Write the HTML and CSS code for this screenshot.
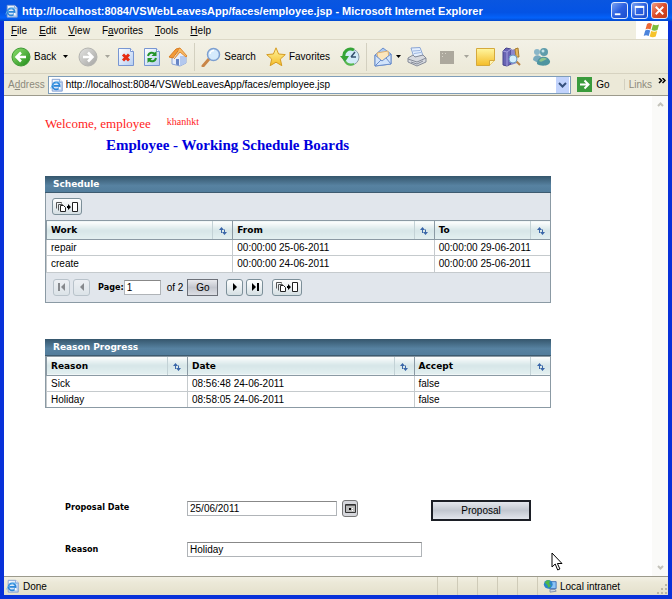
FILE: index.html
```html
<!DOCTYPE html>
<html lang="en">
<head>
    <meta charset="UTF-8">
    <meta name="viewport" content="width=device-width, initial-scale=1.0">
    <title>Employee - Working Schedule Boards</title>
    <link rel="stylesheet" href="styles.css">
</head>
<body>
    <!-- Shared icons -->
    <svg class="defs" width="0" height="0" aria-hidden="true">
        <defs>
            <linearGradient id="green" x1="0" y1="0" x2="1" y2="1">
                <stop offset="0" stop-color="#8fe070"/><stop offset="1" stop-color="#1f8a18"/>
            </linearGradient>
            <linearGradient id="grey" x1="0" y1="0" x2="1" y2="1">
                <stop offset="0" stop-color="#e4e4e2"/><stop offset="1" stop-color="#a4a4a2"/>
            </linearGradient>
            <linearGradient id="paper" x1="0" y1="0" x2="1" y2="1">
                <stop offset="0" stop-color="#ffffff"/><stop offset="1" stop-color="#b4cdf2"/>
            </linearGradient>
            <linearGradient id="gold" x1="0" y1="0" x2="0" y2="1">
                <stop offset="0" stop-color="#fff6a0"/><stop offset="1" stop-color="#f4bc28"/>
            </linearGradient>
            <symbol id="i-page" viewBox="0 0 16 16">
                <path d="M2.500 1.500H11l3 3V15H2.500z" fill="url(#paper)" stroke="#7d9ad0"/>
                <path d="M11 1.500v3h3" fill="#fff" stroke="#7d9ad0"/>
                <circle cx="7" cy="9" r="4" fill="none" stroke="#2b86d8" stroke-width="2"/>
                <path d="M4 9h7" stroke="#2b86d8" stroke-width="2"/>
                <path d="M10 11l2 1" stroke="#fff" stroke-width="2"/>
                <path d="M1 12C1 8 8 3 12 5" fill="none" stroke="#5cb2ef"/>
            </symbol>
            <symbol id="i-sort" viewBox="0 0 8 8">
                <path d="M2.500 6V2M5.500 2.500v4" stroke="#3a66a8"/>
                <path d="M0 3l2.500-3L5 3zM3 5h5L5.500 8z" fill="#3a66a8"/>
            </symbol>
            <symbol id="i-paginate" viewBox="0 0 24 12">
                <path d="M1.500 7.500v-6h5v1" fill="none" stroke="#555"/>
                <path d="M3.500 9.500v-6h4v1" fill="none" stroke="#555"/>
                <path d="M5.500 4.500h3l2 2v4h-5z" fill="#fff" stroke="#222"/>
                <path d="M12 5h1V3l3 3-3 3V7h-1z" fill="#000"/>
                <path d="M17.500 1.500h5v9h-5z" fill="#fff" stroke="#222"/>
            </symbol>
        </defs>
    </svg>

    <div class="window">
        <header class="titlebar">
            <svg class="icon16" aria-hidden="true"><use href="#i-page"/></svg>
            <span class="title">http://localhost:8084/VSWebLeavesApp/faces/employee.jsp - Microsoft Internet Explorer</span>
            <div class="window-buttons">
                <button type="button" aria-label="Minimize"><svg viewBox="0 0 16 16"><path d="M3 11h6v2H3z" fill="#fff"/></svg></button>
                <button type="button" aria-label="Maximize"><svg viewBox="0 0 16 16"><path d="M3.500 4.500h9v8h-9zM3 4h10" fill="none" stroke="#fff"/><path d="M3 3h10v2H3z" fill="#fff"/></svg></button>
                <button type="button" class="close" aria-label="Close"><svg viewBox="0 0 16 16"><path d="M4 4l8 8M12 4l-8 8" stroke="#fff" stroke-width="2"/></svg></button>
            </div>
        </header>

        <nav class="menubar">
            <button type="button"><u>F</u>ile</button>
            <button type="button"><u>E</u>dit</button>
            <button type="button"><u>V</u>iew</button>
            <button type="button">F<u>a</u>vorites</button>
            <button type="button"><u>T</u>ools</button>
            <button type="button"><u>H</u>elp</button>
            <div class="flag">
                <svg viewBox="0 0 18 16" width="18" height="16" aria-hidden="true">
                    <path d="M4 2c2-1.500 3-1 5 0L7.500 7.500c-2-1-3.500-1-5 0z" fill="#ee6a36"/>
                    <path d="M10 2.500c2 1 4 1 6 0L14.500 8c-2 1-4 1-6 0z" fill="#7cbc3c"/>
                    <path d="M2.200 8.500c2-1 3-1 5 0L5.700 14c-2-1-3.500-1-5 0z" fill="#4c84dc"/>
                    <path d="M8.200 9c2 1 4 1 6 0l-1.500 5.500c-2 1-4 1-6 0z" fill="#f6c32c"/>
                </svg>
            </div>
        </nav>

        <div class="toolbar">
            <button type="button" class="tool">
                <svg class="icon20" viewBox="0 0 20 20" aria-hidden="true"><circle cx="10" cy="10" r="9" fill="url(#green)" stroke="#3f9a35"/><path d="M15 10H6M10 5.500L5.500 10l4.500 4.500" fill="none" stroke="#fff" stroke-width="2.500"/></svg>
                <span>Back</span>
                <svg class="arrow gap" viewBox="0 0 5 3" aria-hidden="true"><path d="M0 0h5L2.500 3z"/></svg>
            </button>
            <button type="button" class="tool spaced" aria-label="Forward">
                <svg class="icon20" viewBox="0 0 20 20" aria-hidden="true"><circle cx="10" cy="10" r="9" fill="url(#grey)" stroke="#b4b4b0"/><path d="M5 10h9M10 5.500l4.500 4.500-4.500 4.500" fill="none" stroke="#fff" stroke-width="2.500"/></svg>
                <svg class="arrow gap pale" viewBox="0 0 5 3" aria-hidden="true"><path d="M0 0h5L2.500 3z"/></svg>
            </button>
            <button type="button" class="tool" aria-label="Stop">
                <svg class="icon20" viewBox="0 0 20 20" aria-hidden="true"><path d="M2.500 1.500h12l3 3v14h-15z" fill="url(#paper)" stroke="#7896d2"/><path d="M14.500 1.500v3h3" fill="#fff" stroke="#7896d2"/><path d="M7 7.500l6 6M13 7.500l-6 6" stroke="#e62c14" stroke-width="3"/></svg>
            </button>
            <button type="button" class="tool" aria-label="Refresh">
                <svg class="icon20" viewBox="0 0 20 20" aria-hidden="true"><path d="M2.500 1.500h12l3 3v14h-15z" fill="url(#paper)" stroke="#7896d2"/><path d="M14.500 1.500v3h3" fill="#fff" stroke="#7896d2"/><path d="M6 9c1-4 5-4 7-2M14 11c-1 4-5 4-7 2" fill="none" stroke="#23942a" stroke-width="2"/><path d="M14.500 4v5h-5zM5.500 16v-5h5z" fill="#23942a"/></svg>
            </button>
            <button type="button" class="tool" aria-label="Home">
                <svg class="icon20" viewBox="0 0 20 20" aria-hidden="true"><path d="M4 9v8l8 2 6-3V8l-5-5z" fill="#e6edfa" stroke="#8ba4d6"/><path d="M12 19V9l6 0v7z" fill="#b3c8ee"/><path d="M1 10l7-8 4-1-7 10z" fill="#f39a36" stroke="#d87c22"/><path d="M12 1l7 8-1 1-6-5-6 7" fill="#f8ba64" stroke="#e08c34"/><path d="M8 12h3v6.500l-3-1z" fill="#6684c4"/></svg>
            </button>
            <span class="divider"></span>
            <button type="button" class="tool">
                <svg class="icon20" viewBox="0 0 20 20" aria-hidden="true"><path d="M8 12l-6 7" stroke="#c98547" stroke-width="3" stroke-linecap="round"/><circle cx="12.500" cy="7.500" r="6" fill="#d5eafc" stroke="#7d9fd0" stroke-width="1.500"/><path d="M9 7c0-2 2-3.500 4-3.500" fill="none" stroke="#fff" stroke-width="1.500"/></svg>
                <span>Search</span>
            </button>
            <button type="button" class="tool spaced">
                <svg class="icon20" viewBox="0 0 20 20" aria-hidden="true"><path d="M10 .8l2.600 6.200 6.700.6-5 4.500 1.500 6.600L10 15.200l-5.800 3.500 1.500-6.600-5-4.500 6.700-.6z" fill="url(#gold)" stroke="#d69c24"/></svg>
                <span>Favorites</span>
            </button>
            <button type="button" class="tool spaced" aria-label="History">
                <svg class="icon20" viewBox="0 0 20 20" aria-hidden="true"><circle cx="11" cy="10" r="8" fill="#d3ebf8" stroke="#8c9cab"/><path d="M11 10l4-5M11 10h5" stroke="#35506e" stroke-width="1.500"/><path d="M14 3C8 0 3 5 4 10" fill="none" stroke="#36a437" stroke-width="3"/><path d="M0 9h9l-4 6z" fill="#36a437"/><path d="M5 14c2 4 6 4 9 3" fill="none" stroke="#57b84f" stroke-width="2"/></svg>
            </button>
            <span class="divider"></span>
            <button type="button" class="tool" aria-label="Mail">
                <svg class="icon20" viewBox="0 0 20 20" aria-hidden="true"><path d="M2 8l8-7 8 6v10L2 19z" fill="#a9c8f2" stroke="#6b8ecb"/><path d="M4 6l11-2 1 7-6 4-5-3z" fill="#fbe6bd" stroke="#e0b272"/><path d="M2 8l7 6 9-7v10L2 19z" fill="#d2e4fb" stroke="#6b8ecb"/><path d="M2 19l6-6M18 17l-5-6" stroke="#6b8ecb"/></svg>
                <svg class="arrow" viewBox="0 0 5 3" aria-hidden="true"><path d="M0 0h5L2.500 3z"/></svg>
            </button>
            <button type="button" class="tool" aria-label="Print">
                <svg class="icon20" viewBox="0 0 20 20" aria-hidden="true"><path d="M4 1l9-.5 3 8-9 2z" fill="#e3eefd" stroke="#8aa5d4"/><path d="M6 4l7-.5M7 6.500l7-1" stroke="#9cb6e2"/><path d="M1 11l5-3 2 2 8-2 3 3v4l-9 4-9-4z" fill="#d7dae0" stroke="#858b98"/><path d="M1 12l9 3 9-4M4 15l6 2 6-3" fill="none" stroke="#858b98"/></svg>
            </button>
            <button type="button" class="tool spaced" aria-label="Edit">
                <svg class="icon20" viewBox="0 0 20 20" aria-hidden="true"><path d="M3 4h14v13H3z" fill="#aca89d"/><path d="M5 6h1v1H5zM8 6h1v1H8zM5 9h1v1H5z" fill="#d8d4c8"/></svg>
                <svg class="arrow gap pale" viewBox="0 0 5 3" aria-hidden="true"><path d="M0 0h5L2.500 3z"/></svg>
            </button>
            <button type="button" class="tool" aria-label="Discuss">
                <svg class="icon20" viewBox="0 0 20 20" aria-hidden="true"><path d="M1.500 1.500h18v12l-5 5h-13z" fill="url(#gold)" stroke="#d5a93c"/><path d="M14.500 18.500v-5h5" fill="#fff4b4" stroke="#d5a93c"/></svg>
            </button>
            <button type="button" class="tool" aria-label="Research">
                <svg class="icon20" viewBox="0 0 20 20" aria-hidden="true"><path d="M2 4l3-3 5 1v15l-4 2-4-1z" fill="#6964b4" stroke="#47448c"/><path d="M2 4l4 1v14M6 5l4-3" fill="none" stroke="#a5a0de"/><path d="M10 3l4-1 2 14-6 2z" fill="#8c87ca"/><path d="M14 2l3-1 1 9h-3z" fill="#e5b85c" stroke="#a77c2d"/><path d="M15 14l4 4" stroke="#b98445" stroke-width="2"/><circle cx="12" cy="12" r="4" fill="#d4effc" stroke="#6c9ac4"/></svg>
            </button>
            <button type="button" class="tool spaced" aria-label="Messenger">
                <svg class="icon20" viewBox="0 0 20 20" aria-hidden="true"><circle cx="6" cy="5" r="3" fill="#89b6c8"/><path d="M2 13c0-6 8-6 9-1l-4 4z" fill="#77a9bd"/><circle cx="13" cy="5" r="4" fill="#5f9dab"/><circle cx="12" cy="4" r="1.500" fill="#c5e3e8"/><path d="M6 17c0-9 11-9 13-3 1 5-9 6-13 3z" fill="#4e94a0"/><path d="M8 14c2-4 5-4 8-2-3 1-5 4-8 2z" fill="#8fc48c"/></svg>
            </button>
        </div>

        <form class="addressbar">
            <label for="url">A<u>d</u>dress</label>
            <div class="url-box">
                <svg class="icon16" aria-hidden="true"><use href="#i-page"/></svg>
                <input type="text" id="url" value="http://localhost:8084/VSWebLeavesApp/faces/employee.jsp">
                <button type="button" class="drop" aria-label="Show history"><svg viewBox="0 0 9 6" width="9" height="6"><path d="M1 1l3.500 3.500L8 1" fill="none" stroke="#35507c" stroke-width="2"/></svg></button>
            </div>
            <button type="button" class="go">
                <svg viewBox="0 0 15 15" width="15" height="15" aria-hidden="true"><path d="M0 0h15v15H0z" fill="#3a9b3c"/><path d="M3 7.500h8M7.500 3.500l4 4-4 4" fill="none" stroke="#fff" stroke-width="2"/></svg>
                <span>Go</span>
            </button>
            <span class="links">Links</span>
            <svg class="chevrons" viewBox="0 0 8 6" width="8" height="6" aria-hidden="true"><path d="M1 0l2.500 2.500L1 5M4.500 0L7 2.500 4.500 5" fill="none" stroke="#000" stroke-width="1.500"/></svg>
        </form>

        <div class="viewport">
            <main class="page">
                <p class="welcome">Welcome, employee <small>khanhkt</small></p>
                <h1>Employee - Working Schedule Boards</h1>

                <section class="panel schedule">
                    <h2>Schedule</h2>
                    <div class="panel-bar">
                        <button type="button" class="icon-btn wide" aria-label="Show all rows"><svg width="24" height="12"><use href="#i-paginate"/></svg></button>
                    </div>
                    <table>
                        <colgroup><col class="c-work"><col class="c-from"><col class="c-to"></colgroup>
                        <thead>
                            <tr>
                                <th><div class="head"><span>Work</span><button type="button" aria-label="Sort by work"><svg width="8" height="8"><use href="#i-sort"/></svg></button></div></th>
                                <th><div class="head"><span>From</span><button type="button" aria-label="Sort by from"><svg width="8" height="8"><use href="#i-sort"/></svg></button></div></th>
                                <th><div class="head"><span>To</span><button type="button" aria-label="Sort by to"><svg width="8" height="8"><use href="#i-sort"/></svg></button></div></th>
                            </tr>
                        </thead>
                        <tbody>
                            <tr><td>repair</td><td>00:00:00 25-06-2011</td><td>00:00:00 29-06-2011</td></tr>
                            <tr><td>create</td><td>00:00:00 24-06-2011</td><td>00:00:00 25-06-2011</td></tr>
                        </tbody>
                    </table>
                    <div class="pager">
                        <button type="button" class="icon-btn" disabled aria-label="First page"><svg viewBox="0 0 10 10" width="10" height="10"><path d="M1 1h2v8H1zM8 1v8L4 5z"/></svg></button>
                        <button type="button" class="icon-btn" disabled aria-label="Previous page"><svg viewBox="0 0 10 10" width="10" height="10"><path d="M7 1v8L3 5z"/></svg></button>
                        <div class="page-field">
                            <label for="pageNo">Page:</label>
                            <input type="text" id="pageNo" value="1">
                            <span>of 2</span>
                            <button type="button" class="go-btn">Go</button>
                        </div>
                        <button type="button" class="icon-btn" aria-label="Next page"><svg viewBox="0 0 10 10" width="10" height="10"><path d="M3 1v8l4-4z"/></svg></button>
                        <button type="button" class="icon-btn" aria-label="Last page"><svg viewBox="0 0 10 10" width="10" height="10"><path d="M2 1v8l4-4zM7 1h2v8H7z"/></svg></button>
                        <button type="button" class="icon-btn wide last" aria-label="Show all"><svg width="24" height="12"><use href="#i-paginate"/></svg></button>
                    </div>
                </section>

                <section class="panel progress">
                    <h2>Reason Progress</h2>
                    <table>
                        <colgroup><col class="c-reason"><col class="c-date"><col class="c-accept"></colgroup>
                        <thead>
                            <tr>
                                <th><div class="head"><span>Reason</span><button type="button" aria-label="Sort by reason"><svg width="8" height="8"><use href="#i-sort"/></svg></button></div></th>
                                <th><div class="head"><span>Date</span><button type="button" aria-label="Sort by date"><svg width="8" height="8"><use href="#i-sort"/></svg></button></div></th>
                                <th><div class="head"><span>Accept</span><button type="button" aria-label="Sort by accept"><svg width="8" height="8"><use href="#i-sort"/></svg></button></div></th>
                            </tr>
                        </thead>
                        <tbody>
                            <tr><td>Sick</td><td>08:56:48 24-06-2011</td><td>false</td></tr>
                            <tr><td>Holiday</td><td>08:58:05 24-06-2011</td><td>false</td></tr>
                        </tbody>
                    </table>
                </section>

                <form class="proposal">
                    <label for="date">Proposal Date</label>
                    <div class="date-field">
                        <input type="text" id="date" value="25/06/2011">
                        <button type="button" class="calendar" aria-label="Pick a date"><svg viewBox="0 0 11 9" width="11" height="9"><path d="M.5.5h10v8H.5z" fill="#bbb" stroke="#333"/><path d="M1 1h9v1H1z" fill="#666"/><path d="M4 4h2v2H4z"/><path d="M7 4h1v1H7zM7 6h1v1H7z" fill="#fff"/></svg></button>
                    </div>
                    <button type="button" class="submit">Proposal</button>
                    <label for="reason">Reason</label>
                    <input type="text" id="reason" value="Holiday">
                </form>
            </main>
            <div class="scrollbar">
                <svg viewBox="0 0 7 5" width="7" height="5" aria-hidden="true"><path d="M1 4l2.500-2.500L6 4" fill="none" stroke="#c4c3bb" stroke-width="2"/></svg>
                <svg viewBox="0 0 7 5" width="7" height="5" aria-hidden="true"><path d="M1 1l2.500 2.500L6 1" fill="none" stroke="#c4c3bb" stroke-width="2"/></svg>
            </div>
            <svg class="pointer" viewBox="0 0 12 19" width="12" height="19" aria-hidden="true"><path d="M1 1v14l3.200-3 2.500 6 2.200-1-2.500-5.500H11z" fill="#fff" stroke="#000"/></svg>
        </div>

        <footer class="statusbar">
            <div class="status"><svg class="icon16" aria-hidden="true"><use href="#i-page"/></svg><span>Done</span></div>
            <i></i><i></i><i></i><i></i><i></i>
            <div class="zone">
                <svg viewBox="0 0 16 16" width="14" height="14" aria-hidden="true"><path d="M6 3h9v8H7z" fill="#8cc4f6" stroke="#3b6cb4"/><path d="M8 12h6l1 2-7 1z" fill="#cbd6e4" stroke="#7a8ba8"/><circle cx="6" cy="6" r="5" fill="#2b86c8"/><path d="M2 4c2-3 5-3 6-2L7 5l2 3-3 2-1-3z" fill="#52b847"/></svg>
                <span>Local intranet</span>
                <svg class="grip" viewBox="0 0 11 11" width="11" height="11" aria-hidden="true"><path d="M8 0h2v2H8zM4 4h2v2H4zM8 4h2v2H8zM0 8h2v2H0zM4 8h2v2H4zM8 8h2v2H8z" fill="#bbb7a4"/></svg>
            </div>
        </footer>
    </div>
</body>
</html>
```
FILE: styles.css
```css
* {
    box-sizing: border-box;
}

body {
    margin: 0;
    font-family: "Liberation Sans", Arial, sans-serif;
    font-size: 10px;
    color: #000;
}

button {
    padding: 0;
    border: 0;
    background: none;
    font: inherit;
    color: inherit;
}

svg {
    display: block;
    flex: none;
}

.defs {
    position: absolute;
}

.icon16 {
    width: 14px;
    height: 14px;
}

.icon20 {
    width: 20px;
    height: 20px;
}

.window {
    display: flex;
    flex-direction: column;
    min-height: 100vh;
    border: solid #0831d9;
    border-width: 0 4px 4px;
    background-color: #ece9d8;
}

/* Title bar */
.titlebar {
    display: flex;
    align-items: center;
    gap: 3px;
    height: 21px;
    margin: 0 -4px;
    padding: 0 4px 0 5px;
    background: linear-gradient(#0a56e0, #0453e4 60%, #0462fa 85%, #0348cc);
    color: #fff;
}

.title {
    flex: 1;
    font-size: 11px;
    font-weight: bold;
    white-space: nowrap;
    overflow: hidden;
}

.window-buttons {
    display: flex;
    gap: 3px;
}

.window-buttons button {
    width: 17px;
    height: 17px;
    border: 1px solid #dfe8fb;
    border-radius: 3px;
    background: linear-gradient(135deg, #7ba2f2, #2a5fe0 50%, #1c4dcc);
}

.window-buttons .close {
    background: linear-gradient(135deg, #f0a088, #dc4c28 50%, #c43a18);
}

/* Menu, tool and address bars */
.menubar {
    display: flex;
    align-items: center;
    gap: 12px;
    height: 19px;
    padding-left: 7px;
    background-color: #f0eee0;
    border-bottom: 1px solid #dcd8c6;
}

.flag {
    display: flex;
    align-items: center;
    justify-content: center;
    align-self: stretch;
    width: 32px;
    margin-left: auto;
    background-color: #fff;
}

.toolbar {
    display: flex;
    align-items: center;
    gap: 6px;
    height: 34px;
    padding-left: 7px;
    background: linear-gradient(#f3f1e6, #ece9d8);
    border-bottom: 1px solid #d6d2c0;
}

.tool {
    display: flex;
    align-items: center;
    gap: 3px;
}

.spaced {
    margin-left: 4px;
}

.arrow {
    width: 5px;
    height: 3px;
}

.gap {
    margin-left: 4px;
}

.pale {
    opacity: 0.3;
}

.divider {
    width: 1px;
    height: 28px;
    background-color: #d3d0c0;
}

.addressbar {
    display: flex;
    align-items: center;
    height: 21px;
    padding: 0 2px 0 4px;
}

.addressbar label,
.links {
    color: #8c897c;
}

.url-box {
    display: flex;
    align-items: center;
    flex: 1;
    height: 18px;
    margin-left: 3px;
    padding: 0 1px;
    border: 1px solid #7f9db9;
    background-color: #fff;
}

.url-box input {
    flex: 1;
    min-width: 0;
    padding: 0 2px;
    border: 0;
    font: inherit;
}

.drop {
    display: flex;
    align-items: center;
    justify-content: center;
    width: 13px;
    height: 16px;
    background-color: #c2d3fc;
}

.go {
    display: flex;
    align-items: center;
    gap: 4px;
    margin-left: 6px;
}

.links {
    margin-left: 14px;
    padding-left: 4px;
    border-left: 1px solid #d3d0c0;
}

.chevrons {
    align-self: flex-start;
    margin: 4px 0 0 6px;
}

/* Page area */
.viewport {
    position: relative;
    display: flex;
    flex: 1;
    border: solid #9c9a8c;
    border-width: 1px 0;
    background-color: #fff;
}

.page {
    flex: 1;
    padding: 20px 101px 0 41px;
}

.scrollbar {
    display: flex;
    flex-direction: column;
    justify-content: space-between;
    align-items: center;
    width: 16px;
    padding: 6px 0;
    background-color: #fafaf8;
}

.pointer {
    position: absolute;
    right: 105px;
    bottom: 5px;
}

.welcome {
    display: flex;
    gap: 16px;
    margin: 0;
    font-family: "Liberation Serif", "Times New Roman", serif;
    font-size: 13px;
    line-height: 16px;
    color: #f22;
}

.welcome small {
    font-size: 10px;
    line-height: 12px;
}

h1 {
    margin: 4px 0 0;
    padding-left: 61px;
    font-family: "Liberation Serif", "Times New Roman", serif;
    font-size: 15px;
    line-height: 18px;
    color: #00d;
}

.panel {
    border: 1px solid #8b9aa4;
    background-color: #e1e6ec;
}

.schedule {
    margin-top: 22px;
}

.progress {
    margin-top: 36px;
}

.panel h2 {
    margin: -1px -1px 0;
    padding-left: 8px;
    background: linear-gradient(#35566c, #5782a1 60%, #527d9c);
    border-bottom: 1px solid #3d5b70;
    font-family: "DejaVu Sans", Verdana, sans-serif;
    font-size: 9px;
    line-height: 16px;
    color: #fff;
}

.panel-bar {
    padding: 5px 6px;
}

.icon-btn {
    display: flex;
    align-items: center;
    justify-content: center;
    width: 17px;
    height: 17px;
    border: 1px solid #7c8f99;
    border-radius: 3px;
    background: linear-gradient(#fff, #d5dfe3);
}

.icon-btn.wide {
    width: 30px;
}

.icon-btn:disabled {
    opacity: 0.4;
}

table {
    width: 100%;
    border-collapse: collapse;
    table-layout: fixed;
    background-color: #fff;
}

.c-work {
    width: 37%;
}

.c-from {
    width: 40%;
}

.c-to {
    width: 23%;
}

.c-reason {
    width: 28%;
}

.c-date {
    width: 45%;
}

.c-accept {
    width: 27%;
}

th {
    padding: 0;
    border: solid #8b9aa4;
    border-width: 1px 0 1px 1px;
    background: linear-gradient(#fff, #d6e6e8 50%, #e4f0f1);
    font-family: "DejaVu Sans", Verdana, sans-serif;
    font-size: 9px;
    text-align: left;
}

.head {
    display: flex;
    justify-content: space-between;
    height: 18px;
    padding-left: 4px;
    line-height: 18px;
}

.head button {
    display: flex;
    align-items: center;
    justify-content: center;
    width: 20px;
    padding-top: 2px;
    border-left: 1px solid #c3d2d6;
}

td {
    height: 16px;
    padding: 0 4px;
    border: solid #c5cacd;
    border-width: 1px 0 0 1px;
    line-height: 15px;
}

.pager {
    display: flex;
    align-items: center;
    gap: 3px;
    height: 30px;
    padding: 0 7px;
    border-top: 1px solid #c5cacd;
}

.page-field {
    display: flex;
    align-items: center;
    margin: 0 5px;
}

.page-field label,
.proposal label {
    font-family: "DejaVu Sans Condensed", "DejaVu Sans", sans-serif;
    font-size: 9px;
    font-weight: bold;
}

.page input {
    height: 15px;
    padding: 0 2px;
    border: 1px solid #b0b4b8;
    border-top-color: #888;
    font: inherit;
}

.page-field input {
    width: 37px;
    margin-right: 6px;
}

.go-btn {
    width: 31px;
    height: 17px;
    margin-left: 4px;
    border: 1px solid #6c7078;
    background: linear-gradient(#e8e9ed, #c3c6ce 50%, #dcdee4);
}

.last {
    margin-left: 6px;
}

/* Proposal form */
.proposal {
    display: grid;
    grid-template-columns: 122px 1fr 100px;
    row-gap: 21px;
    margin-top: 92px;
    padding: 0 20px;
}

.proposal label {
    line-height: 14px;
}

.date-field {
    display: flex;
    align-items: flex-start;
    gap: 5px;
}

.date-field input {
    width: 150px;
    margin-top: 1px;
}

.proposal > input {
    width: 235px;
}

.calendar {
    display: flex;
    align-items: center;
    justify-content: center;
    width: 16px;
    height: 17px;
    border: 1px solid #777;
    border-radius: 3px;
    background-color: #d6d7dc;
}

.submit {
    height: 21px;
    border: 2px solid #1c1f26;
    background: linear-gradient(#e4e7ed, #c2c7d0 50%, #e2e5ec);
}

/* Status bar */
.statusbar {
    display: flex;
    height: 18px;
    background: linear-gradient(#f2f0e4, #ece9d8 30%, #e4e0cc);
}

.status,
.zone {
    display: flex;
    align-items: center;
    gap: 3px;
}

.status {
    flex: 1;
    padding-left: 2px;
}

.statusbar i {
    width: 20px;
    border-left: 1px solid #cfcbb8;
}

.zone {
    width: 131px;
    padding-left: 5px;
    border-left: 1px solid #cfcbb8;
}

.grip {
    align-self: flex-end;
    margin-left: auto;
}
```
